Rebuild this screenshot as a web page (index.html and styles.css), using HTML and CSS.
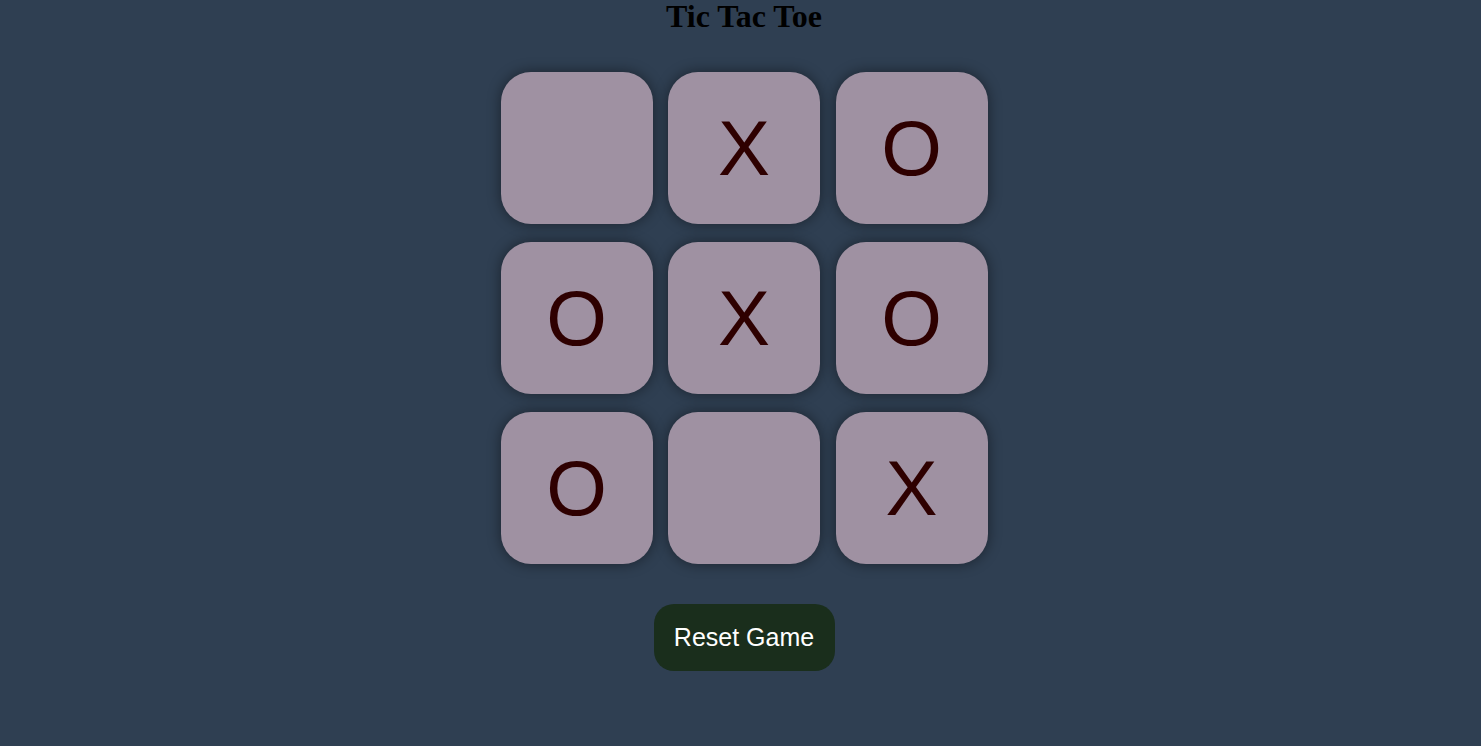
FILE: index.html
```html
<!DOCTYPE html>
<html lang="en">
<head>
<meta charset="UTF-8">
<title>Tic Tac Toe</title>
<link rel="stylesheet" href="styles.css">
</head>
<body>
<main class="page">
  <h1 class="title">Tic Tac Toe</h1>
  <div class="board">
    <button class="cell"></button>
    <button class="cell">X</button>
    <button class="cell">O</button>
    <button class="cell">O</button>
    <button class="cell">X</button>
    <button class="cell">O</button>
    <button class="cell">O</button>
    <button class="cell"></button>
    <button class="cell">X</button>
  </div>
  <button class="reset">Reset Game</button>
</main>
</body>
</html>
```
FILE: styles.css
```css
html, body {
  margin: 0;
  padding: 0;
}

body {
  background: #2f3f52;
  min-height: 746px;
}

.page {
  display: flex;
  flex-direction: column;
  align-items: center;
  padding-left: 7px;
}

.title {
  margin: 0;
  font-family: "Liberation Serif", "Times New Roman", serif;
  font-size: 32px;
  font-weight: bold;
  line-height: 1;
  color: #000;
}

.board {
  margin-top: 40.3px;
  display: grid;
  grid-template-columns: repeat(3, 152px);
  grid-auto-rows: 152px;
  column-gap: 15.5px;
  row-gap: 18px;
}

.cell {
  border: none;
  border-radius: 30px;
  background: #9f91a2;
  box-shadow: 0 0 14px rgba(0, 0, 0, 0.45);
  font-family: "Liberation Sans", Arial, sans-serif;
  font-size: 78px;
  color: #2e0000;
  padding: 0;
  display: flex;
  align-items: center;
  justify-content: center;
}

.reset {
  margin-top: 39.5px;
  width: 181px;
  height: 67px;
  border: none;
  border-radius: 20px;
  background: #1a2e1c;
  color: #ffffff;
  font-family: "Liberation Sans", Arial, sans-serif;
  font-size: 25px;
  padding: 0;
}
```
